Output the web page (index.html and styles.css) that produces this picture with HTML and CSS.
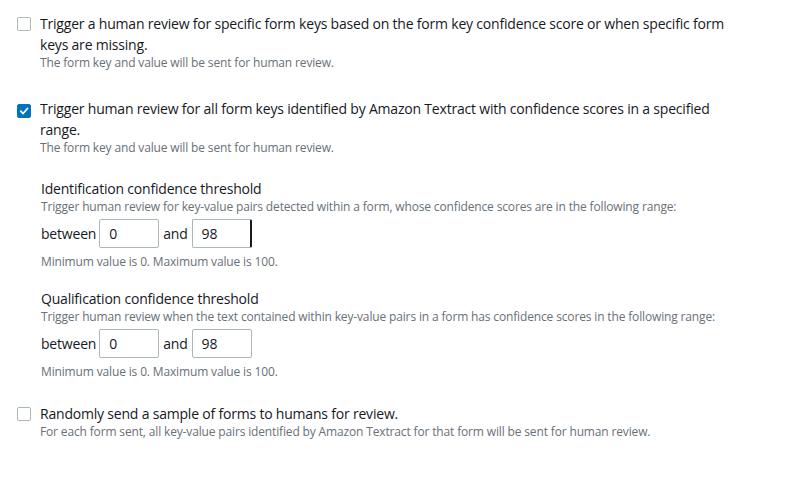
FILE: index.html
```html
<!DOCTYPE html>
<html lang="en">
<head>
<meta charset="utf-8">
<title>Human review conditions</title>
<link rel="stylesheet" href="styles.css">
</head>
<body>
<div class="page">
  <div class="option">
    <span class="checkbox"></span>
    <div class="option-body">
      <div class="option-label">Trigger a human review for specific form keys based on the form key confidence score or when specific form keys are missing.</div>
      <div class="option-desc">The form key and value will be sent for human review.</div>
    </div>
  </div>

  <div class="option option-checked">
    <span class="checkbox checked">
      <svg viewBox="0 0 14 14" width="14" height="14"><path d="M3.2 7.2 L6 10 L11 4" fill="none" stroke="#fff" stroke-width="2" stroke-linecap="round" stroke-linejoin="round"/></svg>
    </span>
    <div class="option-body">
      <div class="option-label">Trigger human review for all form keys identified by Amazon Textract with confidence scores in a specified range.</div>
      <div class="option-desc">The form key and value will be sent for human review.</div>
    </div>
  </div>

  <div class="threshold">
    <div class="threshold-title">Identification confidence threshold</div>
    <div class="threshold-desc">Trigger human review for key-value pairs detected within a form, whose confidence scores are in the following range:</div>
    <div class="range">
      <span class="range-word">between</span>
      <span class="input">0</span>
      <span class="range-word">and</span>
      <span class="input input-active">98</span>
    </div>
    <div class="hint">Minimum value is 0. Maximum value is 100.</div>
  </div>

  <div class="threshold threshold-second">
    <div class="threshold-title">Qualification confidence threshold</div>
    <div class="threshold-desc">Trigger human review when the text contained within key-value pairs in a form has confidence scores in the following range:</div>
    <div class="range">
      <span class="range-word">between</span>
      <span class="input">0</span>
      <span class="range-word">and</span>
      <span class="input">98</span>
    </div>
    <div class="hint">Minimum value is 0. Maximum value is 100.</div>
  </div>

  <div class="option option-last">
    <span class="checkbox"></span>
    <div class="option-body">
      <div class="option-label">Randomly send a sample of forms to humans for review.</div>
      <div class="option-desc">For each form sent, all key-value pairs identified by Amazon Textract for that form will be sent for human review.</div>
    </div>
  </div>
</div>
</body>
</html>
```

FILE: styles.css
```css
html, body {
  margin: 0;
  padding: 0;
  background: #ffffff;
}

body {
  font-family: "Open Sans", "Noto Sans", sans-serif;
  color: #16191f;
  width: 787px;
  height: 478px;
  overflow: hidden;
}

.page {
  padding: 13px 0 0 17px;
  display: flex;
  flex-direction: column;
}

.option {
  display: flex;
  gap: 9px;
  align-items: flex-start;
}

.checkbox {
  flex: none;
  width: 14px;
  height: 14px;
  box-sizing: border-box;
  border: 1px solid #aab7b8;
  border-radius: 2px;
  margin-top: 4px;
  display: flex;
  align-items: center;
  justify-content: center;
  background: #fff;
}

.checkbox.checked {
  background: #0073bb;
  border-color: #0073bb;
  margin-top: 6px;
}

.checkbox svg {
  display: block;
}

.option-body {
  width: 710px;
}

.option-label {
  font-size: 14px;
  line-height: 21px;
  letter-spacing: -0.2px;
}

.option-desc {
  font-size: 12px;
  line-height: 16px;
  letter-spacing: -0.15px;
  color: #687078;
}

.option-checked {
  margin-top: 27px;
}

.threshold {
  margin-left: 24px;
  margin-top: 23px;
}

.threshold-second {
  margin-top: 19px;
}

.threshold-title {
  font-size: 14px;
  line-height: 20px;
  letter-spacing: -0.2px;
}

.threshold-desc {
  font-size: 12px;
  line-height: 16px;
  letter-spacing: -0.15px;
  color: #687078;
}

.range {
  display: flex;
  align-items: center;
  margin-top: 4px;
}

.range-word {
  font-size: 14px;
  line-height: 20px;
  letter-spacing: -0.2px;
  margin-right: 3px;
}

.range-word + .input {
  margin-right: 4px;
}

.range-word + .input + .range-word {
  margin-right: 4px;
}

.input {
  box-sizing: border-box;
  width: 60px;
  height: 29px;
  border: 1px solid #aab7b8;
  border-radius: 2px;
  font-size: 14px;
  line-height: 27px;
  padding-left: 9px;
}

.input-active {
  border-right: 2px solid #16191f;
}

.hint {
  font-size: 12px;
  line-height: 16px;
  letter-spacing: -0.15px;
  color: #687078;
  margin-top: 6px;
}

.option-last {
  margin-top: 23px;
}
```
